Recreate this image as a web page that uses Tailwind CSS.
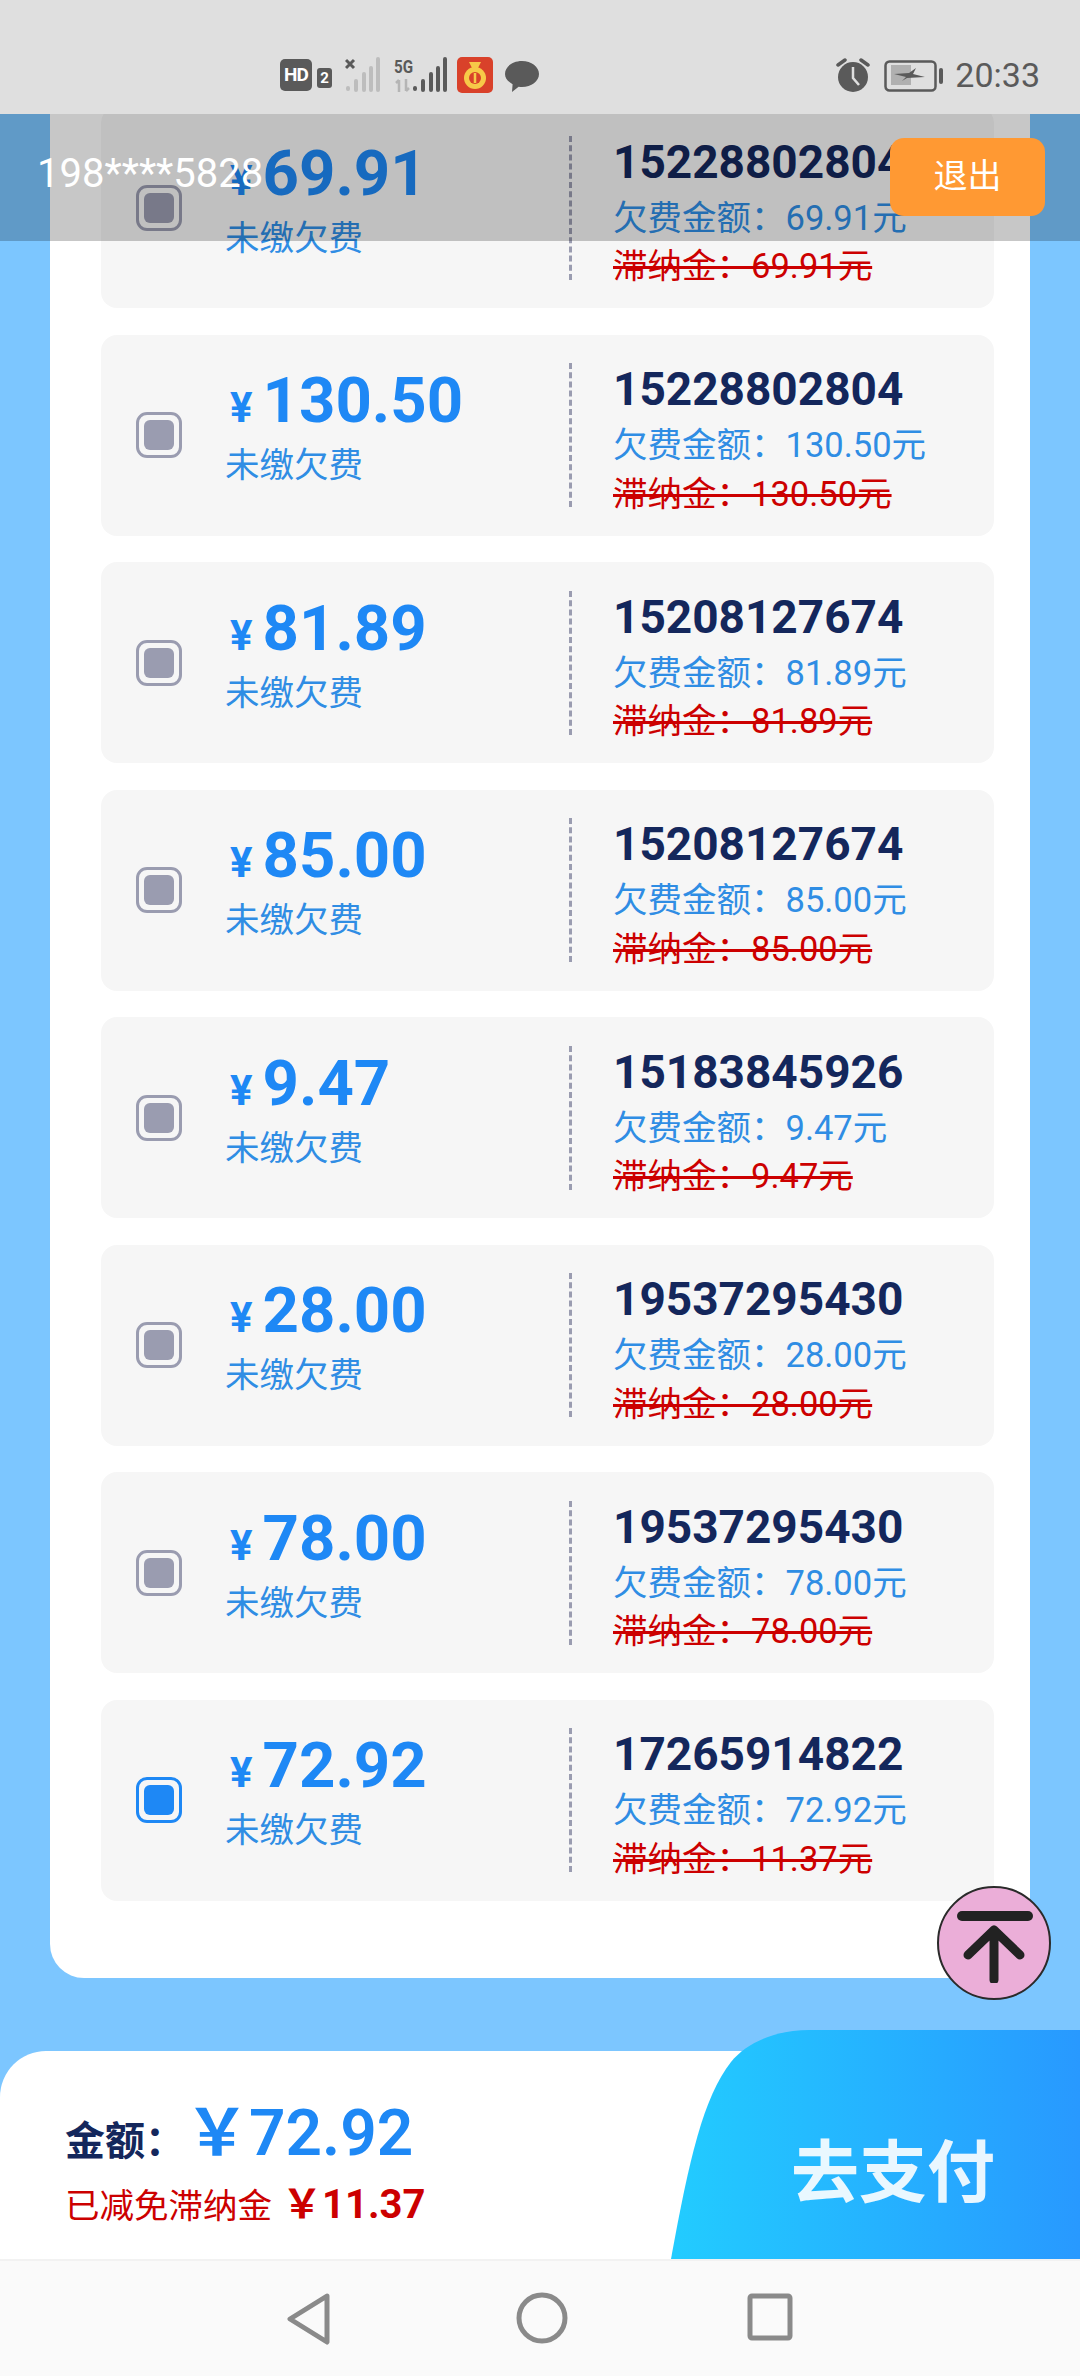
<!DOCTYPE html>
<html lang="zh-CN">
<head>
  <meta charset="UTF-8">
  <meta name="viewport" content="width=device-width, initial-scale=1.0">
  <title>欠费缴纳</title>
  <script src="https://cdn.jsdelivr.net/npm/@tailwindcss/browser@4"></script>
</head>
<body class="w-[1080px] h-[2376px] overflow-hidden flex flex-col bg-[#7cc6ff] [font-family:Roboto,'Noto_Sans_CJK_SC',sans-serif]">
  <!-- Status bar -->
  <div class="relative z-20 h-[114px] shrink-0 bg-[#dfdfdf] flex items-start text-[#5a5a5a]">
    <div class="ml-[280px] mt-[57px] flex items-start">
      <div class="w-[32px] h-[32px] mt-[2px] rounded-[5px] bg-[#5a5a5a] text-white text-[19px] leading-[32px] font-bold text-center tracking-[-1px]">HD</div>
      <div class="w-[15px] h-[20px] mt-[11px] ml-[5px] rounded-[3px] bg-[#5a5a5a] text-white text-[15px] leading-[20px] font-bold text-center">2</div>
      <svg class="ml-[13px]" width="36" height="36" viewBox="0 0 36 36">
        <path d="M1 3l8 8M9 3l-8 8" stroke="#5a5a5a" stroke-width="3"/>
        <g stroke="#bdbdbd" stroke-width="4" stroke-linecap="round"><path d="M3 31v1M11 24v9M19 17v16M26 11v22M33 2v31"/></g>
      </svg>
      <div class="ml-[13px] w-[17px] mt-[1px] relative h-[36px]">
        <span class="block text-[19px] leading-[17px] font-bold whitespace-nowrap origin-left scale-x-[.8]">5G</span>
        <svg class="absolute left-0 top-[20px]" width="17" height="15" viewBox="0 0 17 15"><path d="M5 14V2M2 5l3-3M12 1v12M15 10l-3 3" stroke="#b5b5b5" stroke-width="2.5" fill="none"/></svg>
      </div>
      <svg class="ml-[1px]" width="36" height="36" viewBox="0 0 36 36">
        <g stroke="#5a5a5a" stroke-width="4" stroke-linecap="round"><path d="M3 31v1M11 24v9M19 17v16M26 11v22M33 2v31"/></g>
      </svg>
      <svg class="ml-[9px]" width="36" height="36" viewBox="0 0 36 36">
        <rect width="36" height="36" rx="5" fill="#d9412a"/>
        <path d="M12 5h12l-3 6h-6z" fill="#f7c948"/>
        <circle cx="18" cy="21" r="11" fill="#f7c948"/>
        <circle cx="18" cy="21" r="6" fill="#d9412a"/>
        <path d="M18 16v10" stroke="#f7c948" stroke-width="2.5"/>
      </svg>
      <svg class="ml-[12px] mt-[3px]" width="34" height="33" viewBox="0 0 34 33">
        <path d="M17 1c9.400 0 17 5.700 17 13s-7.600 13-17 13c-1.200 0-2.300-.1-3.400-.3L7 32l.6-7.800C3 21.800 0 18.200 0 14 0 6.700 7.600 1 17 1z" fill="#5a5a5a"/>
      </svg>
    </div>
    <div class="ml-auto mr-[40px] mt-[57px] flex items-start">
      <svg width="34" height="36" viewBox="0 0 34 36">
        <circle cx="17" cy="20" r="15" fill="#5a5a5a"/>
        <path d="M17 10v11l6 7" stroke="#dfdfdf" stroke-width="2.500" fill="none"/>
        <path d="M2 8l7-5M32 8l-7-5" stroke="#5a5a5a" stroke-width="3.500" stroke-linecap="round"/>
      </svg>
      <svg class="ml-[14px] mt-[3px]" width="60" height="32" viewBox="0 0 60 32">
        <rect x="1.500" y="1.500" width="50" height="29" rx="4" fill="none" stroke="#5a5a5a" stroke-width="2.500"/>
        <rect x="7" y="5" width="20" height="20" fill="#b0b0b0"/>
        <path d="M10 14l15-1 7-5-3 6 12 3-18 1-5 3 4-4z" fill="#5a5a5a"/>
        <rect x="55" y="8" width="4" height="16" rx="2" fill="#5a5a5a"/>
      </svg>
      <span class="ml-[11px] text-[34px] leading-[36px]">20:33</span>
    </div>
  </div>

  <!-- Bill list -->
  <main class="relative h-[1937px] shrink-0">
    <div class="h-full overflow-hidden">
      <div id="bill-list" class="mx-[50px] -mt-[7px] pl-[51px] pr-[36px] pb-[77px] bg-white rounded-b-[34px] flex flex-col gap-[26.5px]"></div>
    </div>

    <div class="absolute left-0 top-0 w-full h-[127px] bg-black/[.22] flex items-center justify-between pl-[37px] pr-[35px]">
      <span class="text-white text-[40px] leading-[46px] -mt-[8px]">198****5828</span>
      <button class="w-[155px] h-[78px] -mt-[2px] rounded-[14px] bg-[#ff9933] text-white text-[34px]">退出</button>
    </div>

    <button class="absolute left-[937px] top-[1772px] w-[114px] h-[114px] rounded-full bg-[#ebaed8] border-2 border-[#2a2a2a] flex items-center justify-center">
      <svg width="80" height="80" viewBox="0 0 80 80">
        <path d="M8 13h66" stroke="#222" stroke-width="10" stroke-linecap="round"/>
        <path d="M40 27v50M14 52l26-25 26 25" stroke="#222" stroke-width="9" stroke-linecap="round" stroke-linejoin="round" fill="none"/>
      </svg>
    </button>
  </main>

  <!-- Total and pay -->
  <div class="relative h-[208px] shrink-0 bg-white rounded-tl-[46px]">
    <div class="pl-[65px] pt-[51px]">
      <div class="flex items-baseline h-[64px]">
        <span class="text-[40px] font-bold text-[#14275c] -mt-[3px]">金额：</span>
        <span class="text-[64px] font-semibold leading-[64px] text-[#1e88f5]">￥72.92</span>
      </div>
      <div class="flex items-baseline mt-[16px]">
        <span class="text-[34.5px] leading-[46px] text-[#cc0000]">已减免滞纳金</span>
        <span class="ml-[10px] text-[40px] leading-[46px] font-bold text-[#cc0000]">￥11.37</span>
      </div>
    </div>
    <button class="absolute right-0 bottom-0 w-[411px] h-[229px]">
      <svg class="absolute inset-0" width="411" height="229" viewBox="0 0 411 229">
        <defs><linearGradient id="pay" x1="0" y1="0" x2="1" y2="0"><stop offset="0" stop-color="#22ccff"/><stop offset="1" stop-color="#2899ff"/></linearGradient></defs>
        <path d="M2 229C20 130 34 68 62 32 78 12 108 0 140 0H411V229Z" fill="url(#pay)"/>
      </svg>
      <span class="absolute left-[122px] top-[106px] text-[68px] leading-[76px] font-bold text-white/90 whitespace-nowrap">去支付</span>
    </button>
  </div>

  <!-- Navigation bar -->
  <div class="h-[117px] shrink-0 bg-[#fafafa] border-t-2 border-[#f2f2f2] relative flex items-start justify-center gap-[184px] pt-[31px] pr-[2px]">
    <svg width="46" height="54" viewBox="0 0 46 54"><path d="M41 4L4 27l37 23z" fill="none" stroke="#8a8a8a" stroke-width="5" stroke-linejoin="round"/></svg>
    <svg width="52" height="52" viewBox="0 0 52 52"><circle cx="26" cy="26" r="23" fill="none" stroke="#8a8a8a" stroke-width="5"/></svg>
    <svg width="46" height="50" viewBox="0 0 46 50" class="-ml-[5px]"><rect x="3" y="4" width="40" height="42" rx="2" fill="none" stroke="#8a8a8a" stroke-width="5"/></svg>
  </div>

  <script>
    const bills = [
      ['69.91', '15228802804', '69.91', false],
      ['130.50', '15228802804', '130.50', false],
      ['81.89', '15208127674', '81.89', false],
      ['85.00', '15208127674', '85.00', false],
      ['9.47', '15183845926', '9.47', false],
      ['28.00', '19537295430', '28.00', false],
      ['78.00', '19537295430', '78.00', false],
      ['72.92', '17265914822', '11.37', true],
    ];

    document.getElementById('bill-list').innerHTML = bills.map(([amount, phone, fine, checked]) => `
      <div class="h-[201px] rounded-[16px] bg-[#f6f6f6] flex items-center">
        <div class="ml-[35px] w-[46px] h-[46px] rounded-[11px] border-[3px] ${checked ? 'border-[#1e88f5]' : 'border-[#9a9cb0]'} flex items-center justify-center">
          <div class="w-[30px] h-[30px] rounded-[6px] ${checked ? 'bg-[#1e88f5]' : 'bg-[#9a9cb0]'}"></div>
        </div>
        <div class="ml-[43px] w-[344px] pb-[18px]">
          <div class="flex items-baseline h-[72px] text-[#1e88f5] font-bold">
            <span class="ml-[5px] mr-[10px] text-[42px]">¥</span>
            <span class="text-[63.5px] leading-[72px]">${amount}</span>
          </div>
          <div class="mt-[6px] text-[34.5px] leading-[44px] text-[#2f8de4]">未缴欠费</div>
        </div>
        <div class="h-[144px] border-l-[3px] border-dashed border-[#9a9cb0]"></div>
        <div class="ml-[41px] pt-[10px] whitespace-nowrap">
          <div class="text-[46px] leading-[56px] font-bold text-[#14275c]">${phone}</div>
          <div class="mt-[3px] text-[34.5px] leading-[50px] text-[#2f8de4]">欠费金额：${amount}元</div>
          <div class="-mt-[1.5px] text-[34.5px] leading-[50px] text-[#cc0000] line-through decoration-[3px]">滞纳金：${fine}元</div>
        </div>
      </div>`).join('');
  </script>
</body>
</html>
